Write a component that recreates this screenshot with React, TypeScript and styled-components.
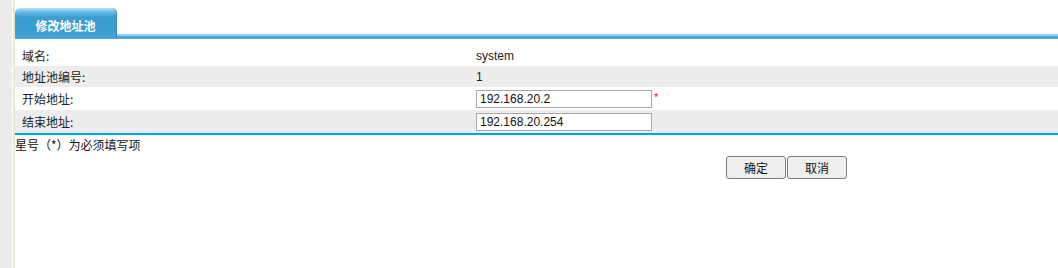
import React from 'react';
import styled, { createGlobalStyle } from 'styled-components';

const GlobalStyle = createGlobalStyle`
  html, body {
    margin: 0;
    padding: 0;
    background: #ffffff;
  }
  body {
    font-family: 'Liberation Sans', Arial, 'Noto Sans CJK SC', sans-serif;
    font-size: 12px;
    color: #333333;
  }
`;

interface Field {
  label: string;
  value: string;
  input?: boolean;
  required?: boolean;
}

const fields: Field[] = [
  { label: '域名:', value: 'system' },
  { label: '地址池编号:', value: '1' },
  { label: '开始地址:', value: '192.168.20.2', input: true, required: true },
  { label: '结束地址:', value: '192.168.20.254', input: true },
];

const App: React.FC = () => {
  return (
    <Page>
      <GlobalStyle />
      <SideStrip />
      <Divider />
      <Main>
        <TabBar>
          <Tab>修改地址池</Tab>
          <TabLine />
        </TabBar>
        <Table>
          {fields.map((f, i) => (
            <Row key={f.label} striped={i % 2 === 1} tall={!!f.input}>
              <Label>{f.label}</Label>
              <Value>
                {f.input ? <TextInput defaultValue={f.value} /> : f.value}
                {f.required && <Star>*</Star>}
              </Value>
            </Row>
          ))}
        </Table>
        <Note>星号（*）为必须填写项</Note>
        <Buttons>
          <Button>确定</Button>
          <Button>取消</Button>
        </Buttons>
      </Main>
    </Page>
  );
};

export default App;

const Page = styled.div`
  display: flex;
  width: 1058px;
  height: 268px;
  overflow: hidden;
`;

const SideStrip = styled.div`
  width: 12px;
  background-color: #ececec;
`;

const Divider = styled.div`
  width: 2px;
  margin-left: 1px;
  background-color: #ece8d6;
`;

const Main = styled.div`
  flex: 1;
  display: flex;
  flex-direction: column;
`;

const TabBar = styled.div`
  display: flex;
  align-items: flex-end;
  height: 39px;
`;

const Tab = styled.div`
  width: 102px;
  height: 31px;
  box-sizing: border-box;
  border-radius: 5px 5px 0 0;
  border-right: 1px solid #2f8cbd;
  background: linear-gradient(
    to bottom,
    #bfe3f5 0px,
    #8acbeb 2px,
    #5eb4e0 5px,
    #3c9fd1 9px,
    #3a9dcf 22px,
    #48a8d7 31px
  );
  color: #ffffff;
  font-family: 'Noto Sans CJK SC', sans-serif;
  font-size: 12px;
  font-weight: bold;
  display: flex;
  align-items: center;
  justify-content: center;
  padding-top: 4px;
`;

const TabLine = styled.div`
  flex: 1;
  height: 5px;
  background: linear-gradient(to bottom, #96cfeb 0px, #96cfeb 2px, #47a7d6 2px);
`;

const Table = styled.div`
  margin-top: 6px;
  border-bottom: 2px solid #00a2e8;
`;

const Row = styled.div<{ striped: boolean; tall: boolean }>`
  display: grid;
  grid-template-columns: 455px 1fr;
  align-items: center;
  height: ${(p) => (p.tall ? 23 : 21)}px;
  background-color: ${(p) => (p.striped ? '#ededed' : '#ffffff')};
`;

const Label = styled.div`
  padding-left: 7px;
  font-family: 'Noto Sans CJK SC', sans-serif;
  font-size: 12px;
  color: #222222;
`;

const Value = styled.div`
  display: flex;
  align-items: center;
  padding-left: 6px;
  font-size: 12px;
  color: #222222;
`;

const TextInput = styled.input`
  width: 176px;
  height: 18px;
  box-sizing: border-box;
  border: 1px solid #a9a9a9;
  padding: 0 3px;
  font-family: 'Liberation Sans', Arial, sans-serif;
  font-size: 12px;
  color: #111111;
  outline: none;
`;

const Star = styled.span`
  color: #ff0000;
  font-size: 11px;
  margin-left: 2px;
  align-self: flex-start;
  margin-top: 1px;
`;

const Note = styled.div`
  padding-top: 2px;
  font-family: 'Noto Sans CJK SC', sans-serif;
  font-size: 12px;
  color: #111111;
  line-height: 16px;
`;

const Buttons = styled.div`
  display: flex;
  gap: 1px;
  padding-left: 711px;
  margin-top: 3px;
`;

const Button = styled.button`
  width: 60px;
  height: 23px;
  box-sizing: border-box;
  border: 1px solid #808080;
  border-radius: 3px;
  background-color: #efefef;
  font-family: 'Noto Sans CJK SC', sans-serif;
  font-size: 12px;
  color: #111111;
  padding: 0;
`;
